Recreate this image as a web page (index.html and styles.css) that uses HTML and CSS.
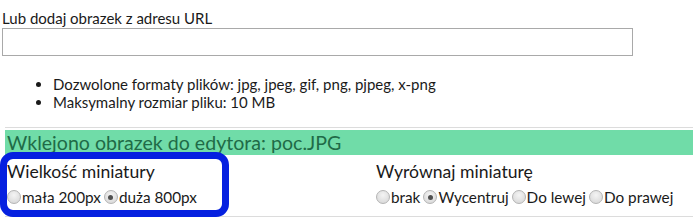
FILE: index.html
```html
<!DOCTYPE html>
<html lang="pl">
  <head>
    <meta charset="UTF-8" />
    <title>Obrazek</title>
    <link rel="stylesheet" href="styles.css">
  </head>
  <body>
    <div class="page">
      <div class="form-group">
        <label class="field-label" for="url">Lub dodaj obrazek z adresu URL</label>
        <input type="text" id="url" class="url-input" />
      </div>

      <ul class="rules">
        <li>Dozwolone formaty plików: jpg, jpeg, gif, png, pjpeg, x-png</li>
        <li>Maksymalny rozmiar pliku: 10 MB</li>
      </ul>

      <div class="pasted">
        <div class="notice">Wklejono obrazek do edytora: poc.JPG</div>
        <div class="options">
          <div class="option-group">
            <div class="option-title">Wielkość miniatury</div>
            <div class="radios">
              <label><span class="radio"></span>mała 200px</label>
              <label><span class="radio checked"></span>duża 800px</label>
            </div>
          </div>
          <div class="option-group">
            <div class="option-title">Wyrównaj miniaturę</div>
            <div class="radios">
              <label><span class="radio"></span>brak</label>
              <label><span class="radio checked"></span>Wycentruj</label>
              <label><span class="radio"></span>Do lewej</label>
              <label><span class="radio"></span>Do prawej</label>
            </div>
          </div>
        </div>
        <div class="highlight"></div>
      </div>
    </div>
  </body>
</html>
```

FILE: styles.css
```css
body {
  margin: 0;
  font-family: Lato, 'Liberation Sans', sans-serif;
  color: #1a1a1a;
  background-color: white;
}
.page {
  padding: 8px 0 0 2px;
}
.field-label {
  display: block;
  font-size: 15px;
  line-height: 20px;
}
.url-input {
  display: block;
  box-sizing: border-box;
  width: 631px;
  height: 28px;
  margin: 0;
  border: 1px solid #a9a9a9;
  padding: 2px 4px;
}
.rules {
  margin: 19px 0 0;
  padding-left: 51px;
  font-size: 15px;
  line-height: 18px;
}
.pasted {
  position: relative;
  margin: 16px 0 0 3px;
  border-top: 1px solid #dcdcdc;
  border-bottom: 1px solid #dcdcdc;
  padding-top: 2px;
}
.notice {
  background-color: #70dca8;
  color: #1f6b47;
  font-size: 19.6px;
  line-height: 25px;
  padding-left: 2px;
  height: 25px;
  overflow: hidden;
}
.options {
  display: grid;
  grid-template-columns: 369px 1fr;
  padding: 5px 0 6px 2px;
}
.option-title {
  font-size: 17.6px;
  line-height: 24px;
}
.radios {
  display: flex;
  gap: 3px;
  font-size: 15.3px;
  line-height: 26px;
}
.radios label {
  display: flex;
  align-items: center;
}
.radio {
  box-sizing: border-box;
  width: 14px;
  height: 14px;
  border-radius: 50%;
  border: 1px solid #b4b4b4;
  background: radial-gradient(circle at 50% 35%, #f4f4f4, #d4d4d4);
  margin-right: 1px;
  position: relative;
}
.radio.checked::after {
  content: '';
  position: absolute;
  left: 3.5px;
  top: 3.5px;
  width: 5px;
  height: 5px;
  border-radius: 50%;
  background-color: #505050;
}
.highlight {
  position: absolute;
  left: -5px;
  top: 24px;
  width: 215px;
  height: 51px;
  border: 7px solid #0520e0;
  border-radius: 13px;
  pointer-events: none;
}
```
